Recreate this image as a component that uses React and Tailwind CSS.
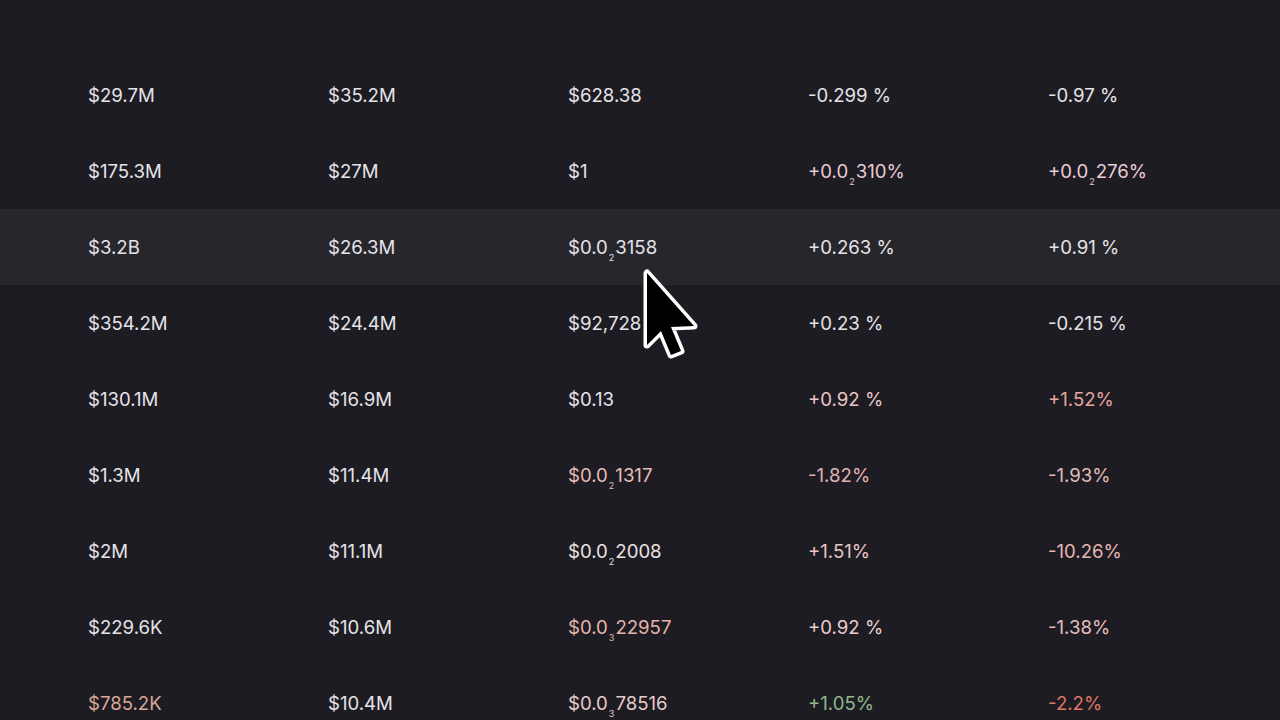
import React from 'react';

// sub = small zero-count digit printed under the baseline, e.g. $0.0₂3158
function Num({ pre, sub, post, color }) {
    return (
        <span className={color}>
            {pre}
            {sub && <span className="relative top-[7px] text-[9px] mx-[1px]">{sub}</span>}
            {post}
        </span>
    );
}

const W = 'text-[#e5e3e7]';

const rows = [
    [{ pre: '$29.7M' }, { pre: '$35.2M' }, { pre: '$628.38' }, { pre: '-0.299 %' }, { pre: '-0.97 %' }],
    [{ pre: '$175.3M' }, { pre: '$27M' }, { pre: '$1' }, { pre: '+0.0', sub: '2', post: '310%', color: 'text-[#e9cbd3]' }, { pre: '+0.0', sub: '2', post: '276%', color: 'text-[#ebcdd5]' }],
    [{ pre: '$3.2B' }, { pre: '$26.3M' }, { pre: '$0.0', sub: '2', post: '3158' }, { pre: '+0.263 %' }, { pre: '+0.91 %' }],
    [{ pre: '$354.2M' }, { pre: '$24.4M' }, { pre: '$92,728' }, { pre: '+0.23 %' }, { pre: '-0.215 %' }],
    [{ pre: '$130.1M' }, { pre: '$16.9M' }, { pre: '$0.13' }, { pre: '+0.92 %', color: 'text-[#e9c6c6]' }, { pre: '+1.52%', color: 'text-[#e6a69e]' }],
    [{ pre: '$1.3M' }, { pre: '$11.4M' }, { pre: '$0.0', sub: '2', post: '1317', color: 'text-[#e7bcb8]' }, { pre: '-1.82%', color: 'text-[#e0b3b3]' }, { pre: '-1.93%', color: 'text-[#e4bcbc]' }],
    [{ pre: '$2M' }, { pre: '$11.1M' }, { pre: '$0.0', sub: '2', post: '2008', color: 'text-[#ebe1e1]' }, { pre: '+1.51%', color: 'text-[#e8c4c4]' }, { pre: '-10.26%', color: 'text-[#e7b5b0]' }],
    [{ pre: '$229.6K' }, { pre: '$10.6M' }, { pre: '$0.0', sub: '3', post: '22957', color: 'text-[#e6b4ab]' }, { pre: '+0.92 %', color: 'text-[#eacfcf]' }, { pre: '-1.38%', color: 'text-[#e6bfbf]' }],
    [{ pre: '$785.2K', color: 'text-[#d9a796]' }, { pre: '$10.4M' }, { pre: '$0.0', sub: '3', post: '78516', color: 'text-[#e6cccc]' }, { pre: '+1.05%', color: 'text-[#8db98c]' }, { pre: '-2.2%', color: 'text-[#df7565]' }],
];

export default function App() {
    return (
        <div className="relative w-[1280px] h-[720px] overflow-hidden bg-[#1d1c23] text-[18.6px]" style={{ fontFamily: 'Inter, "Noto Sans", sans-serif' }}>
            <div className="h-[57px]"></div>
            {rows.map((row, i) => (
                <div key={i} className={`grid grid-cols-[240px_240px_240px_240px_240px] pl-[88px] pt-[2px] h-[76px] items-center ${i === 2 ? 'bg-[#27262c]' : ''}`}>
                    {row.map((c, j) => (
                        <div key={j} className="whitespace-nowrap">
                            <Num {...c} color={c.color || W} />
                        </div>
                    ))}
                </div>
            ))}

            {/* mouse pointer */}
            <svg className="absolute left-0 top-0 pointer-events-none" width="1280" height="720">
                <polygon
                    points="647,273 647,345 661,331 671,355 681,351 671,327 694,326"
                    fill="#000"
                    stroke="#fff"
                    strokeWidth="7"
                    strokeLinejoin="round"
                    paintOrder="stroke"
                />
            </svg>
        </div>
    );
}
